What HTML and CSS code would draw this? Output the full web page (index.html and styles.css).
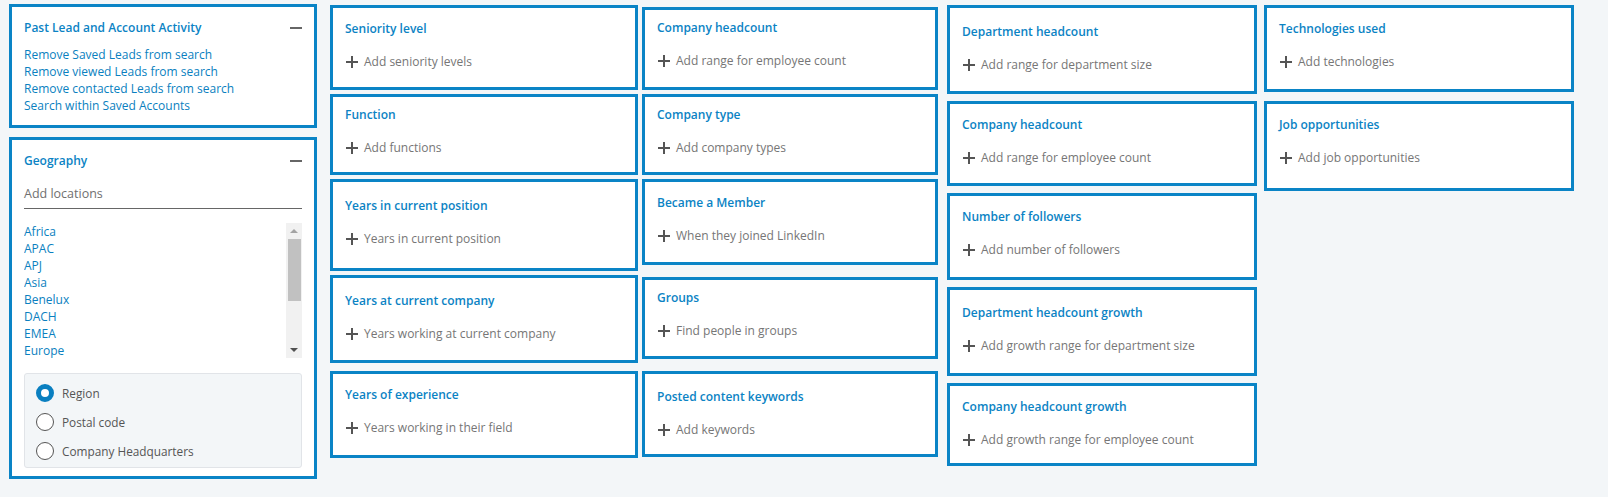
FILE: index.html
```html
<!DOCTYPE html>
<html lang="en">
<head>
<meta charset="utf-8">
<title>Lead filters</title>
<link rel="stylesheet" href="styles.css">
</head>
<body>
<div class="board">
  <div class="col col1">
    <section class="card h124">
      <div class="card-head">
        <h3 class="title">Past Lead and Account Activity</h3>
        <span class="minus"></span>
      </div>
      <ul class="links">
        <li>Remove Saved Leads from search</li>
        <li>Remove viewed Leads from search</li>
        <li>Remove contacted Leads from search</li>
        <li>Search within Saved Accounts</li>
      </ul>
    </section>
    <section class="card h342">
      <div class="card-head">
        <h3 class="title">Geography</h3>
        <span class="minus"></span>
      </div>
      <div class="loc-input">Add locations</div>
      <div class="loc-list">
        <ul class="regions">
          <li>Africa</li>
          <li>APAC</li>
          <li>APJ</li>
          <li>Asia</li>
          <li>Benelux</li>
          <li>DACH</li>
          <li>EMEA</li>
          <li>Europe</li>
        </ul>
        <div class="scrollbar">
          <span class="arrow up"></span>
          <span class="thumb"></span>
          <span class="arrow down"></span>
        </div>
      </div>
      <div class="radios">
        <label class="radio"><span class="dot on"></span>Region</label>
        <label class="radio"><span class="dot"></span>Postal code</label>
        <label class="radio"><span class="dot"></span>Company Headquarters</label>
      </div>
    </section>
  </div>

  <div class="col col2">
    <section class="card h85"><h3 class="title">Seniority level</h3><div class="add"><span class="plus"></span>Add seniority levels</div></section>
    <section class="card h81 t-high"><h3 class="title">Function</h3><div class="add"><span class="plus"></span>Add functions</div></section>
    <section class="card h92 t-low"><h3 class="title">Years in current position</h3><div class="add"><span class="plus"></span>Years in current position</div></section>
    <section class="card h88 t-mid"><h3 class="title">Years at current company</h3><div class="add"><span class="plus"></span>Years working at current company</div></section>
    <section class="card h87 spaced"><h3 class="title">Years of experience</h3><div class="add"><span class="plus"></span>Years working in their field</div></section>
  </div>

  <div class="col col3">
    <section class="card h83 t-high"><h3 class="title">Company headcount</h3><div class="add"><span class="plus"></span>Add range for employee count</div></section>
    <section class="card h81 t-high"><h3 class="title">Company type</h3><div class="add"><span class="plus"></span>Add company types</div></section>
    <section class="card h86"><h3 class="title">Became a Member</h3><div class="add"><span class="plus"></span>When they joined LinkedIn</div></section>
    <section class="card h82 spaced t-high"><h3 class="title">Groups</h3><div class="add"><span class="plus"></span>Find people in groups</div></section>
    <section class="card h86 spaced t-mid"><h3 class="title">Posted content keywords</h3><div class="add"><span class="plus"></span>Add keywords</div></section>
  </div>

  <div class="col col4">
    <section class="card h89 t-low"><h3 class="title">Department headcount</h3><div class="add"><span class="plus"></span>Add range for department size</div></section>
    <section class="card h85"><h3 class="title">Company headcount</h3><div class="add"><span class="plus"></span>Add range for employee count</div></section>
    <section class="card h87"><h3 class="title">Number of followers</h3><div class="add"><span class="plus"></span>Add number of followers</div></section>
    <section class="card h89 t-mid"><h3 class="title">Department headcount growth</h3><div class="add"><span class="plus"></span>Add growth range for department size</div></section>
    <section class="card h83"><h3 class="title">Company headcount growth</h3><div class="add"><span class="plus"></span>Add growth range for employee count</div></section>
  </div>

  <div class="col col5">
    <section class="card h87"><h3 class="title">Technologies used</h3><div class="add"><span class="plus"></span>Add technologies</div></section>
    <section class="card h90"><h3 class="title">Job opportunities</h3><div class="add"><span class="plus"></span>Add job opportunities</div></section>
  </div>
</div>
</body>
</html>
```

FILE: styles.css
```css
* { box-sizing: border-box; }

html, body {
  margin: 0;
  padding: 0;
  background: #f3f6f8;
  font-family: "Open Sans", "Noto Sans", Arial, sans-serif;
  color: #666;
}

.board {
  display: flex;
  align-items: flex-start;
  padding-left: 9px;
}

.col {
  display: flex;
  flex-direction: column;
}

.col1 { width: 308px; padding-top: 4px; gap: 9px; }
.col2 { width: 308px; margin-left: 13px; padding-top: 5px; gap: 4px; }
.col3 { width: 296px; margin-left: 4px; padding-top: 7px; gap: 4px; }
.col4 { width: 310px; margin-left: 9px; padding-top: 5px; gap: 7px; }
.col5 { width: 310px; margin-left: 7px; padding-top: 5px; gap: 9px; }

.card {
  background: #fff;
  border: 3px solid #0a84c6;
  padding: 12px 12px 0 12px;
}

.t-high { padding-top: 9px; }
.t-mid { padding-top: 14px; }
.t-low { padding-top: 15px; }

.spaced { margin-top: 4px; }
.col3 .spaced { margin-top: 8px; }

.h81 { height: 81px; }
.h82 { height: 82px; }
.h83 { height: 83px; }
.h85 { height: 85px; }
.h86 { height: 86px; }
.h87 { height: 87px; }
.h88 { height: 88px; }
.h89 { height: 89px; }
.h90 { height: 90px; }
.h92 { height: 92px; }
.h124 { height: 124px; }
.h342 { height: 342px; }

.card-head {
  display: flex;
  align-items: center;
  justify-content: space-between;
}

.title {
  margin: 0;
  font-size: 12px;
  line-height: 18px;
  font-weight: 600;
  color: #0b83c4;
}

.minus {
  display: block;
  width: 12px;
  height: 2px;
  background: #666;
}

.add {
  display: flex;
  align-items: center;
  margin-top: 15px;
  font-size: 12px;
  line-height: 18px;
  color: #767676;
}

.plus {
  position: relative;
  width: 12px;
  height: 12px;
  margin: 0 6px 0 1px;
  flex: none;
}
.plus::before,
.plus::after {
  content: "";
  position: absolute;
  background: #555;
}
.plus::before { left: 0; right: 0; top: 5px; height: 1.6px; }
.plus::after { top: 0; bottom: 0; left: 5.2px; width: 1.6px; }

.links {
  list-style: none;
  margin: 9px 0 0;
  padding: 0;
  font-size: 12px;
  line-height: 17px;
  color: #0a7fc0;
}

.loc-input {
  margin-top: 15px;
  height: 24px;
  border-bottom: 1px solid #666;
  font-size: 12.5px;
  line-height: 18px;
  color: #707070;
}

.loc-list {
  display: flex;
  margin-top: 14px;
  height: 135px;
}

.regions {
  list-style: none;
  margin: 0;
  padding: 0;
  flex: 1;
  font-size: 12px;
  line-height: 17px;
  color: #0a7fc0;
  overflow: hidden;
}

.scrollbar {
  width: 16px;
  background: #f1f1f1;
  display: flex;
  flex-direction: column;
  align-items: center;
}

.arrow {
  width: 0;
  height: 0;
  border-left: 4px solid transparent;
  border-right: 4px solid transparent;
}
.arrow.up { border-bottom: 4px solid #a3a3a3; margin-top: 6px; }
.arrow.down { border-top: 4px solid #505050; margin-top: auto; margin-bottom: 6px; }

.thumb {
  width: 13px;
  height: 62px;
  margin-top: 6px;
  background: #c1c1c1;
}

.radios {
  margin-top: 15px;
  height: 95px;
  background: #f3f6f8;
  border: 1px solid #e1e4e8;
  border-radius: 3px;
  padding: 10px 11px 0;
  display: flex;
  flex-direction: column;
  gap: 11px;
}

.radio {
  display: flex;
  align-items: center;
  font-size: 11.8px;
  line-height: 18px;
  color: #555;
}

.dot {
  width: 18px;
  height: 18px;
  border-radius: 50%;
  border: 1px solid #555;
  background: #fff;
  margin-right: 8px;
  flex: none;
}
.dot.on {
  border: 5px solid #0a7fc0;
}
```
